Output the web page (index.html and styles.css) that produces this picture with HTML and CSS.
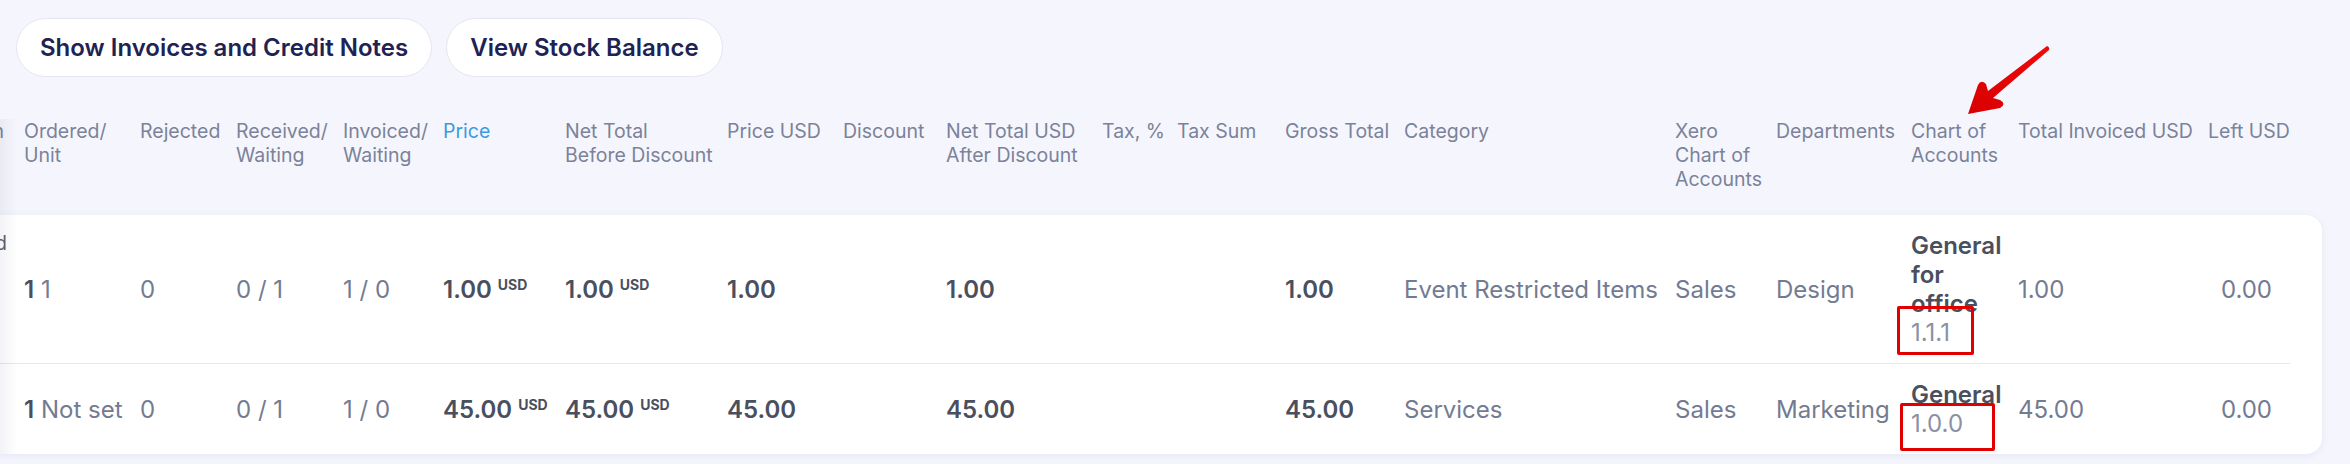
FILE: index.html
```html
<!DOCTYPE html>
<html lang="en">
<head>
<meta charset="utf-8">
<title>Purchase order lines</title>
<link rel="stylesheet" href="styles.css">
</head>
<body>
<div class="page">
  <div class="actions">
    <button class="pill">Show Invoices and Credit Notes</button>
    <button class="pill">View Stock Balance</button>
  </div>

  <div class="scroller">
    <div class="grid-table">
      <div class="cols thead">
        <div class="th lead">Description</div>
        <div class="th">Ordered/<br>Unit</div>
        <div class="th">Rejected</div>
        <div class="th">Received/<br>Waiting</div>
        <div class="th">Invoiced/<br>Waiting</div>
        <div class="th active">Price</div>
        <div class="th">Net Total<br>Before Discount</div>
        <div class="th">Price USD</div>
        <div class="th">Discount</div>
        <div class="th">Net Total USD<br>After Discount</div>
        <div class="th">Tax, %</div>
        <div class="th">Tax Sum</div>
        <div class="th">Gross Total</div>
        <div class="th">Category</div>
        <div class="th">Xero<br>Chart of<br>Accounts</div>
        <div class="th">Departments</div>
        <div class="th">Chart of<br>Accounts</div>
        <div class="th">Total Invoiced USD</div>
        <div class="th">Left USD</div>
      </div>

      <div class="card">
        <div class="cols row">
          <div class="td lead top">Standard</div>
          <div class="td"><b class="strong">1</b> 1</div>
          <div class="td">0</div>
          <div class="td">0 / 1</div>
          <div class="td">1 / 0</div>
          <div class="td strong">1.00 <sup class="cur">USD</sup></div>
          <div class="td strong">1.00 <sup class="cur">USD</sup></div>
          <div class="td strong">1.00</div>
          <div class="td"></div>
          <div class="td strong">1.00</div>
          <div class="td"></div>
          <div class="td"></div>
          <div class="td strong">1.00</div>
          <div class="td">Event Restricted Items</div>
          <div class="td">Sales</div>
          <div class="td">Design</div>
          <div class="td acct"><b class="strong">General<br>for<br>office</b><span class="code">1.1.1</span></div>
          <div class="td">1.00</div>
          <div class="td num-right">0.00</div>
        </div>
        <div class="cols row">
          <div class="td lead top"></div>
          <div class="td"><b class="strong">1</b> Not set</div>
          <div class="td">0</div>
          <div class="td">0 / 1</div>
          <div class="td">1 / 0</div>
          <div class="td strong">45.00 <sup class="cur">USD</sup></div>
          <div class="td strong">45.00 <sup class="cur">USD</sup></div>
          <div class="td strong">45.00</div>
          <div class="td"></div>
          <div class="td strong">45.00</div>
          <div class="td"></div>
          <div class="td"></div>
          <div class="td strong">45.00</div>
          <div class="td">Services</div>
          <div class="td">Sales</div>
          <div class="td">Marketing</div>
          <div class="td acct"><b class="strong">General</b><span class="code">1.0.0</span></div>
          <div class="td">45.00</div>
          <div class="td num-right">0.00</div>
        </div>
      </div>
    </div>
    <div class="scroll-shade"></div>
  </div>

  <svg class="note-arrow" viewBox="0 0 110 90" width="110" height="90" aria-hidden="true">
    <defs>
      <linearGradient id="ar" x1="0" y1="1" x2="1" y2="0">
        <stop offset="0" stop-color="#d80000"/>
        <stop offset="1" stop-color="#f00a0a"/>
      </linearGradient>
    </defs>
    <path d="M18,79 L28,50 Q31,44 36,49 L38,56 L97,11 Q100,12 99,15 L43,63 L50,65 Q57,69 50,73 Z" fill="url(#ar)"/>
  </svg>
  <div class="note-box box-a"></div>
  <div class="note-box box-b"></div>
</div>
</body>
</html>
```

FILE: styles.css
```css
* { box-sizing: border-box; }

html, body {
  margin: 0;
  padding: 0;
  background: #f5f6fd;
}

body {
  font-family: "Inter", "Noto Sans", sans-serif;
  color: #737b93;
  width: 2350px;
  height: 464px;
  overflow: hidden;
}

.page {
  position: relative;
  height: 464px;
}

.actions {
  display: flex;
  gap: 14px;
  padding: 18px 16px 0;
}

.pill {
  height: 59px;
  padding: 0 23px;
  border: 1.5px solid #e4e6ef;
  border-radius: 30px;
  background: #ffffff;
  font-family: "Inter", sans-serif;
  font-size: 24px;
  font-weight: 600;
  color: #1f2353;
  display: flex;
  align-items: center;
}

.scroller {
  position: relative;
  overflow-x: clip;
  margin-top: 42px;
}

.grid-table {
  margin-left: -200px;
  width: 2522px;
}

.cols {
  display: grid;
  grid-template-columns: 200px 116px 96px 107px 100px 122px 162px 116px 103px 156px 75px 108px 119px 271px 101px 135px 107px 190px 82px;
}

.thead {
  padding: 0 32px 24px 24px;
}

.th {
  font-size: 19.5px;
  line-height: 24px;
  color: #7b8299;
  white-space: nowrap;
}

.th.active { color: #3b9be0; }

.lead {
  text-align: right;
  padding-right: 20px;
  white-space: nowrap;
}

.card {
  background: #ffffff;
  border-radius: 16px;
  padding: 0 32px 0 24px;
  box-shadow: 0 2px 8px rgba(40, 50, 110, 0.08);
}

.row {
  align-items: center;
}

.row + .row {
  border-top: 1px solid #e7e8ee;
}

.td {
  padding: 16px 0;
  font-size: 24px;
  line-height: 29px;
  color: #737b93;
  white-space: nowrap;
}

.td.top {
  align-self: start;
  font-size: 19.5px;
  line-height: 24px;
  padding-right: 17px;
  color: #5c6272;
}

.strong {
  font-weight: 600;
  color: #4a4f5e;
}

.cur {
  font-size: 14px;
  font-weight: 700;
  vertical-align: 8px;
  line-height: 0;
}

.acct {
  display: flex;
  flex-direction: column;
}

.code {
  color: #8a90a5;
}

.num-right {
  text-align: right;
  padding-right: 18px;
}

.scroll-shade {
  position: absolute;
  left: 0;
  top: 0;
  bottom: 0;
  width: 18px;
  background: linear-gradient(to right, rgba(40, 50, 100, 0.06), rgba(40, 50, 100, 0));
  pointer-events: none;
}

.note-arrow {
  position: absolute;
  left: 1950px;
  top: 35px;
}

.note-box {
  position: absolute;
  border: 3.5px solid #e00000;
  border-radius: 2px;
}

.box-a {
  left: 1897px;
  top: 306px;
  width: 77px;
  height: 49px;
}

.box-b {
  left: 1900px;
  top: 403px;
  width: 95px;
  height: 48px;
}
```
